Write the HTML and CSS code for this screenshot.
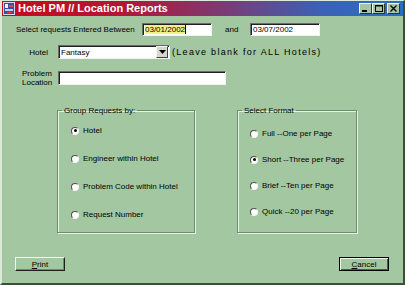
FILE: index.html
```html
<!DOCTYPE html>
<html lang="en">
<head>
    <meta charset="UTF-8">
    <meta name="viewport" content="width=device-width, initial-scale=1.0">
    <title>Hotel PM // Location Reports</title>
    <link rel="stylesheet" href="styles.css">
</head>
<body>

    <div class="window">
        <div class="titlebar">
            <svg class="app-icon" width="12" height="13" viewBox="0 0 12 13">
                <rect x="0.5" y="0.5" width="11" height="12" fill="#3a4ea0" stroke="#d8d8f0"/>
                <rect x="2" y="2" width="3" height="4" fill="#f0f0ff"/>
                <rect x="6" y="3" width="4" height="2" fill="#e04060"/>
                <rect x="2" y="7" width="8" height="2" fill="#c8d0f0"/>
                <rect x="4" y="10" width="5" height="1" fill="#e04060"/>
            </svg>
            <span class="title">Hotel PM // Location Reports</span>
            <div class="caption-buttons">
                <span class="cap-btn">
                    <svg width="11" height="9" viewBox="0 0 11 9"><rect x="2" y="6" width="5" height="2" fill="#000"/></svg>
                </span>
                <span class="cap-btn">
                    <svg width="11" height="9" viewBox="0 0 11 9"><rect x="2.5" y="1.5" width="7" height="6" fill="none" stroke="#000"/><rect x="2" y="1" width="8" height="1.5" fill="#000"/></svg>
                </span>
                <span class="cap-btn close">
                    <svg width="11" height="9" viewBox="0 0 11 9"><path d="M2.5 1.5 L8.5 7.5 M8.5 1.5 L2.5 7.5" stroke="#000" stroke-width="1.4"/></svg>
                </span>
            </div>
        </div>

        <div class="content">
            <div class="row row-dates">
                <span class="lbl-between">Select requests Entered Between</span>
                <div class="field date"><span class="sel">03/01/2002</span><span class="caret"></span></div>
                <span class="lbl-and">and</span>
                <div class="field date">03/07/2002</div>
            </div>

            <div class="row row-hotel">
                <span class="lbl-hotel">Hotel</span>
                <div class="field combo">
                    <span class="combo-text">Fantasy</span>
                    <span class="combo-btn">
                        <svg width="7" height="4" viewBox="0 0 7 4"><path d="M0 0 H7 L3.5 4 Z" fill="#000"/></svg>
                    </span>
                </div>
                <span class="hint">(Leave blank for ALL Hotels)</span>
            </div>

            <div class="row row-location">
                <span class="lbl-location">Problem<br>Location</span>
                <div class="field location"></div>
            </div>

            <div class="groups">
                <fieldset class="group group-by">
                    <legend>Group Requests by:</legend>
                    <div class="options">
                        <label class="opt"><span class="radio on"></span>Hotel</label>
                        <label class="opt"><span class="radio"></span>Engineer within Hotel</label>
                        <label class="opt"><span class="radio"></span>Problem Code within Hotel</label>
                        <label class="opt"><span class="radio"></span>Request Number</label>
                    </div>
                </fieldset>

                <fieldset class="group group-format">
                    <legend>Select Format</legend>
                    <div class="options">
                        <label class="opt"><span class="radio"></span>Full --One per Page</label>
                        <label class="opt"><span class="radio on"></span>Short --Three per Page</label>
                        <label class="opt"><span class="radio"></span>Brief --Ten per Page</label>
                        <label class="opt"><span class="radio"></span>Quick --20 per Page</label>
                    </div>
                </fieldset>
            </div>

            <div class="actions">
                <button class="btn"><u>P</u>rint</button>
                <button class="btn default"><u>C</u>ancel</button>
            </div>
        </div>
    </div>

</body>
</html>
```

FILE: styles.css
```css
body {
    margin: 0;
    padding: 0;
    background-color: #a3c7a0;
    font-family: "Liberation Sans", Arial, sans-serif;
    font-size: 8px;
    color: #000;
}
.window {
    width: 405px;
    height: 285px;
    box-sizing: border-box;
    background-color: #a3c7a0;
    border-top: 1px solid #dcebd9;
    border-left: 2px solid #dcebd9;
    border-right: 2px solid #3e4e3c;
    border-bottom: 2px solid #3e4e3c;
}

/* title bar */
.titlebar {
    height: 15px;
    display: flex;
    align-items: center;
    padding: 0 3px 0 1px;
    background: linear-gradient(90deg, #c8081e 0%, #b41634 30%, #7c3a74 55%, #3a62b6 80%, #2c6cc4 100%);
}
.app-icon {
    flex: none;
}
.title {
    margin-left: 3px;
    color: white;
    font-size: 11px;
    font-weight: bold;
    line-height: 15px;
}
.caption-buttons {
    margin-left: auto;
    display: flex;
}
.cap-btn {
    width: 11px;
    height: 9px;
    display: flex;
    background-color: #a8c4a4;
    border: 1px solid;
    border-color: #eef6ec #2a3a28 #2a3a28 #eef6ec;
}
.cap-btn.close {
    margin-left: 2px;
}

/* form rows */
.row {
    display: flex;
    align-items: center;
    padding-left: 14px;
}
.row-dates {
    margin-top: 7px;
    height: 13px;
}
.row-hotel {
    margin-top: 9px;
    height: 14px;
}
.row-location {
    margin-top: 10px;
    height: 18px;
}
.lbl-between {
    width: 126px;
}
.lbl-and {
    margin-left: 13px;
    width: 25px;
}
.lbl-hotel {
    width: 42px;
    box-sizing: border-box;
    padding-right: 10px;
    text-align: right;
}
.lbl-location {
    width: 42px;
    box-sizing: border-box;
    padding-left: 6px;
    line-height: 9px;
}
.field {
    box-sizing: border-box;
    background-color: white;
    border: 1px solid;
    border-color: #6a6a6a #f0f4f0 #f0f4f0 #6a6a6a;
    box-shadow: inset 1px 1px 0 #202020;
    display: flex;
    align-items: center;
    padding-left: 2px;
}
.date {
    width: 70px;
    height: 13px;
}
.sel {
    background-color: #f2f282;
}
.caret {
    width: 1px;
    height: 9px;
    background-color: #000;
}
.combo {
    width: 112px;
    height: 14px;
    padding-right: 1px;
}
.combo-text {
    flex: 1;
}
.combo-btn {
    width: 10px;
    height: 10px;
    display: flex;
    align-items: center;
    justify-content: center;
    background-color: #d4d8cc;
    border: 1px solid;
    border-color: #f4f4f0 #404040 #404040 #f4f4f0;
}
.hint {
    margin-left: 2px;
    font-size: 9px;
    letter-spacing: 1.3px;
}
.location {
    width: 168px;
    height: 14px;
}

/* option groups */
.groups {
    margin-top: 19px;
    padding-left: 55px;
    display: flex;
    gap: 42px;
}
.group {
    margin: 0;
    padding: 0;
    height: 127px;
    box-sizing: border-box;
    min-inline-size: 0;
    border: 1px solid #6f8f6c;
    box-shadow: inset 1px 1px 0 #e6f2e4, 1px 1px 0 #e6f2e4;
}
.group legend {
    margin-left: 4px;
    padding: 0 2px;
    line-height: 9px;
}
.group-by {
    width: 138px;
}
.group-format {
    width: 120px;
}
.options {
    display: flex;
    flex-direction: column;
}
.group-by .options {
    padding: 11px 0 0 13px;
    gap: 19px;
}
.group-format .options {
    padding: 14px 0 0 12px;
    gap: 17px;
}
.opt {
    display: flex;
    align-items: center;
    height: 9px;
    gap: 4px;
}
.radio {
    width: 8px;
    height: 8px;
    box-sizing: border-box;
    border-radius: 50%;
    background-color: white;
    border: 1px solid;
    border-color: #505050 #f4f4f4 #f4f4f4 #505050;
    display: flex;
    align-items: center;
    justify-content: center;
}
.radio.on::after {
    content: "";
    width: 3px;
    height: 3px;
    border-radius: 50%;
    background-color: #000;
}

/* buttons */
.actions {
    margin-top: 24px;
    display: flex;
    justify-content: space-between;
    padding: 0 14px 0 13px;
}
.btn {
    width: 50px;
    height: 14px;
    padding: 0;
    font-family: "Liberation Sans", Arial, sans-serif;
    font-size: 8px;
    color: #000;
    background-color: #a3c7a0;
    border: 1px solid;
    border-color: #f0f8ee #202020 #202020 #f0f8ee;
    box-shadow: inset -1px -1px 0 #6d8c6a;
}
.btn.default {
    border: 1px solid #000;
    box-shadow: inset 1px 1px 0 #f0f8ee, inset -1px -1px 0 #4a5e48;
}
```
